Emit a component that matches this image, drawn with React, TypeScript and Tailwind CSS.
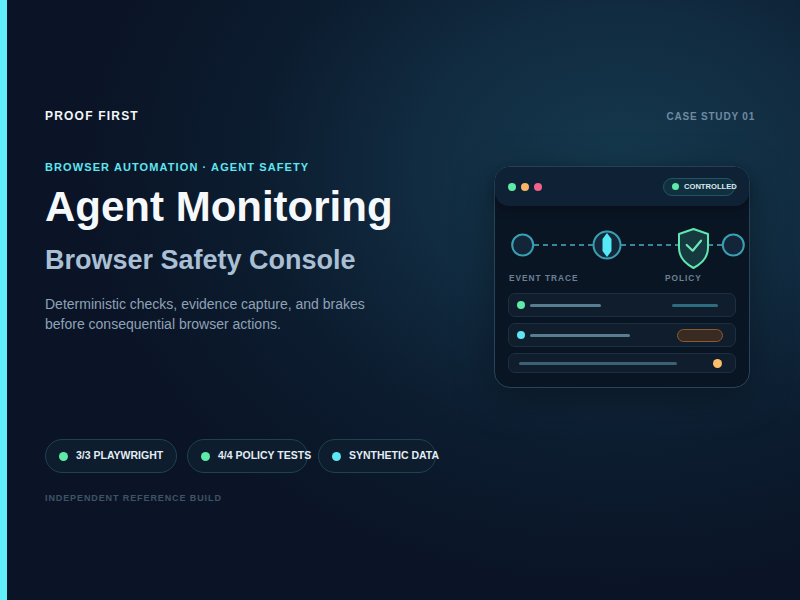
const font = "font-['Liberation_Sans',Arial,sans-serif]";

function Chip({ label, dot, width }: { label: string; dot: string; width: string }) {
  return (
    <div
      className={`${width} h-[34px] flex items-center gap-[8px] pl-[13px] rounded-full border border-[#1c4253] bg-[#0d1d2e] whitespace-nowrap`}
    >
      <span className={`w-[9px] h-[9px] rounded-full shrink-0 ${dot}`} />
      <span className="text-[10.5px] font-bold text-[#e4edf4]">{label}</span>
    </div>
  );
}

function Timeline() {
  return (
    <svg width="256" height="46" viewBox="0 0 256 46" className="block">
      <g stroke="#3a8799" strokeWidth="2" strokeDasharray="5 4" fill="none">
        <line x1="39" y1="21" x2="98" y2="21" />
        <line x1="126" y1="21" x2="184" y2="21" />
        <line x1="213" y1="21" x2="228" y2="21" />
      </g>
      <circle cx="27.7" cy="21" r="10.5" fill="#122539" stroke="#3a9fb1" strokeWidth="2" />
      <circle cx="112" cy="21" r="13.5" fill="#13283b" stroke="#3a9fb1" strokeWidth="2" />
      <polygon points="112,9 116.5,15 116.5,27 112,33 107.5,27 107.5,15" fill="#55e9f7" />
      <path
        d="M198.5 5 L213 10 V24 C213 33 206 40 198.5 44 C191 40 184 33 184 24 V10 Z"
        fill="#163940"
        stroke="#5ee8b0"
        strokeWidth="2"
        strokeLinejoin="round"
      />
      <path
        d="M191.7 21 L197.7 26.7 L206 16.7"
        fill="none"
        stroke="#6ee7b7"
        strokeWidth="2.2"
        strokeLinecap="round"
        strokeLinejoin="round"
      />
      <circle cx="238.3" cy="21" r="10.5" fill="#122539" stroke="#3a9fb1" strokeWidth="2" />
    </svg>
  );
}

function Panel() {
  return (
    <div className="relative w-[256px] h-[222px] rounded-[16px] border-[1.5px] border-[#26455a] bg-[#0a1524] shadow-[0_10px_40px_rgba(0,0,0,0.35)]">
      {/* window header */}
      <div className="h-[39px] rounded-t-[15px] rounded-b-[14px] bg-[#0f2134] shadow-[0_4px_10px_rgba(0,0,0,0.3)] flex items-center justify-between pl-[13px] pr-[14px]">
        <div className="flex items-center gap-[5px]">
          <span className="w-[8px] h-[8px] rounded-full bg-[#5eeaa8]" />
          <span className="w-[8px] h-[8px] rounded-full bg-[#f9b765]" />
          <span className="w-[8px] h-[8px] rounded-full bg-[#f2628a]" />
        </div>
        <div className="w-[72px] h-[18px] flex items-center gap-[5px] pl-[8px] rounded-full bg-[#11303f] border border-[#1f5566] whitespace-nowrap">
          <span className="w-[7px] h-[7px] rounded-full bg-[#5eeaa8] shrink-0" />
          <span className="text-[7.6px] font-bold text-[#d9e7ef]">CONTROLLED</span>
        </div>
      </div>

      <div className="mt-[18px]">
        <Timeline />
      </div>

      <div className="mt-[3px] flex pl-[14px] text-[8.3px] leading-[10px] font-bold tracking-[0.12em] text-[#6a8195]">
        <span className="w-[156px]">EVENT TRACE</span>
        <span>POLICY</span>
      </div>

      <div className="mt-[10px] mx-[13px] flex flex-col gap-[6px]">
        <div className="h-[24px] flex items-center rounded-[7px] border border-[#1b3042] bg-[#0f1d2d] pl-[8px] pr-[17px]">
          <span className="w-[8px] h-[8px] rounded-full bg-[#5eeaa8]" />
          <span className="ml-[5px] w-[71px] h-[3px] rounded-full bg-[#587d91]" />
          <span className="ml-auto w-[46px] h-[3px] rounded-full bg-[#2d6c7f]" />
        </div>
        <div className="h-[24px] flex items-center rounded-[7px] border border-[#1b3042] bg-[#0f1d2d] pl-[8px] pr-[12px]">
          <span className="w-[8px] h-[8px] rounded-full bg-[#5ee6f5]" />
          <span className="ml-[5px] w-[100px] h-[3px] rounded-full bg-[#587d91]" />
          <span className="ml-auto w-[46px] h-[13px] rounded-full bg-[#3a2b22] border border-[#8a5a30]" />
        </div>
        <div className="h-[20px] flex items-center rounded-[7px] border border-[#1b3042] bg-[#0f1d2d] pl-[10px] pr-[13px]">
          <span className="w-[158px] h-[3px] rounded-full bg-[#3d6174]" />
          <span className="ml-auto w-[9px] h-[9px] rounded-full bg-[#fbbf6b]" />
        </div>
      </div>
    </div>
  );
}

export default function App() {
  return (
    <div
      className={`${font} flex w-[800px] h-[600px] overflow-hidden bg-[#0a1426] bg-[radial-gradient(ellipse_540px_420px_at_620px_170px,#15394e_0%,#112b40_38%,#0c1c2f_68%,#0a1426_100%)]`}
    >
      <div className="w-[7px] shrink-0 bg-[#60eefa]" />

      <div className="flex-1 flex flex-col pl-[38px] pr-[45px] pt-[109px]">
        {/* top row */}
        <div className="h-[14px] flex items-center justify-between">
          <span className="text-[12px] font-bold tracking-[0.1em] text-[#f3f6f9]">PROOF FIRST</span>
          <span className="text-[10px] font-bold tracking-[0.08em] text-[#6e8ba3]">CASE STUDY 01</span>
        </div>

        <div className="mt-[37px] flex items-start">
          <div className="w-[449px] shrink-0 flex flex-col">
            <p className="text-[11px] leading-[14px] font-bold tracking-[0.1em] text-[#5ee6f2]">
              BROWSER AUTOMATION · AGENT SAFETY
            </p>
            <h1 className="mt-[9px] text-[42px] leading-[48px] font-bold text-[#f6f9fb] whitespace-nowrap">
              Agent Monitoring
            </h1>
            <h2 className="mt-[13px] text-[27px] leading-[32px] font-bold text-[#a9bfd4] whitespace-nowrap">
              Browser Safety Console
            </h2>
            <p className="mt-[18px] text-[14px] leading-[20px] text-[#8fa2b6]">
              Deterministic checks, evidence capture, and brakes
              <br />
              before consequential browser actions.
            </p>

            <div className="mt-[105px] flex gap-[10px]">
              <Chip label="3/3 PLAYWRIGHT" dot="bg-[#5eeaa8]" width="w-[132px]" />
              <Chip label="4/4 POLICY TESTS" dot="bg-[#5eeaa8]" width="w-[121px]" />
              <Chip label="SYNTHETIC DATA" dot="bg-[#5ee6f5]" width="w-[118px]" />
            </div>

            <p className="mt-[19px] text-[9px] leading-[12px] font-bold tracking-[0.1em] text-[#3f5367]">
              INDEPENDENT REFERENCE BUILD
            </p>
          </div>

          <div className="mt-[6px]">
            <Panel />
          </div>
        </div>
      </div>
    </div>
  );
}
